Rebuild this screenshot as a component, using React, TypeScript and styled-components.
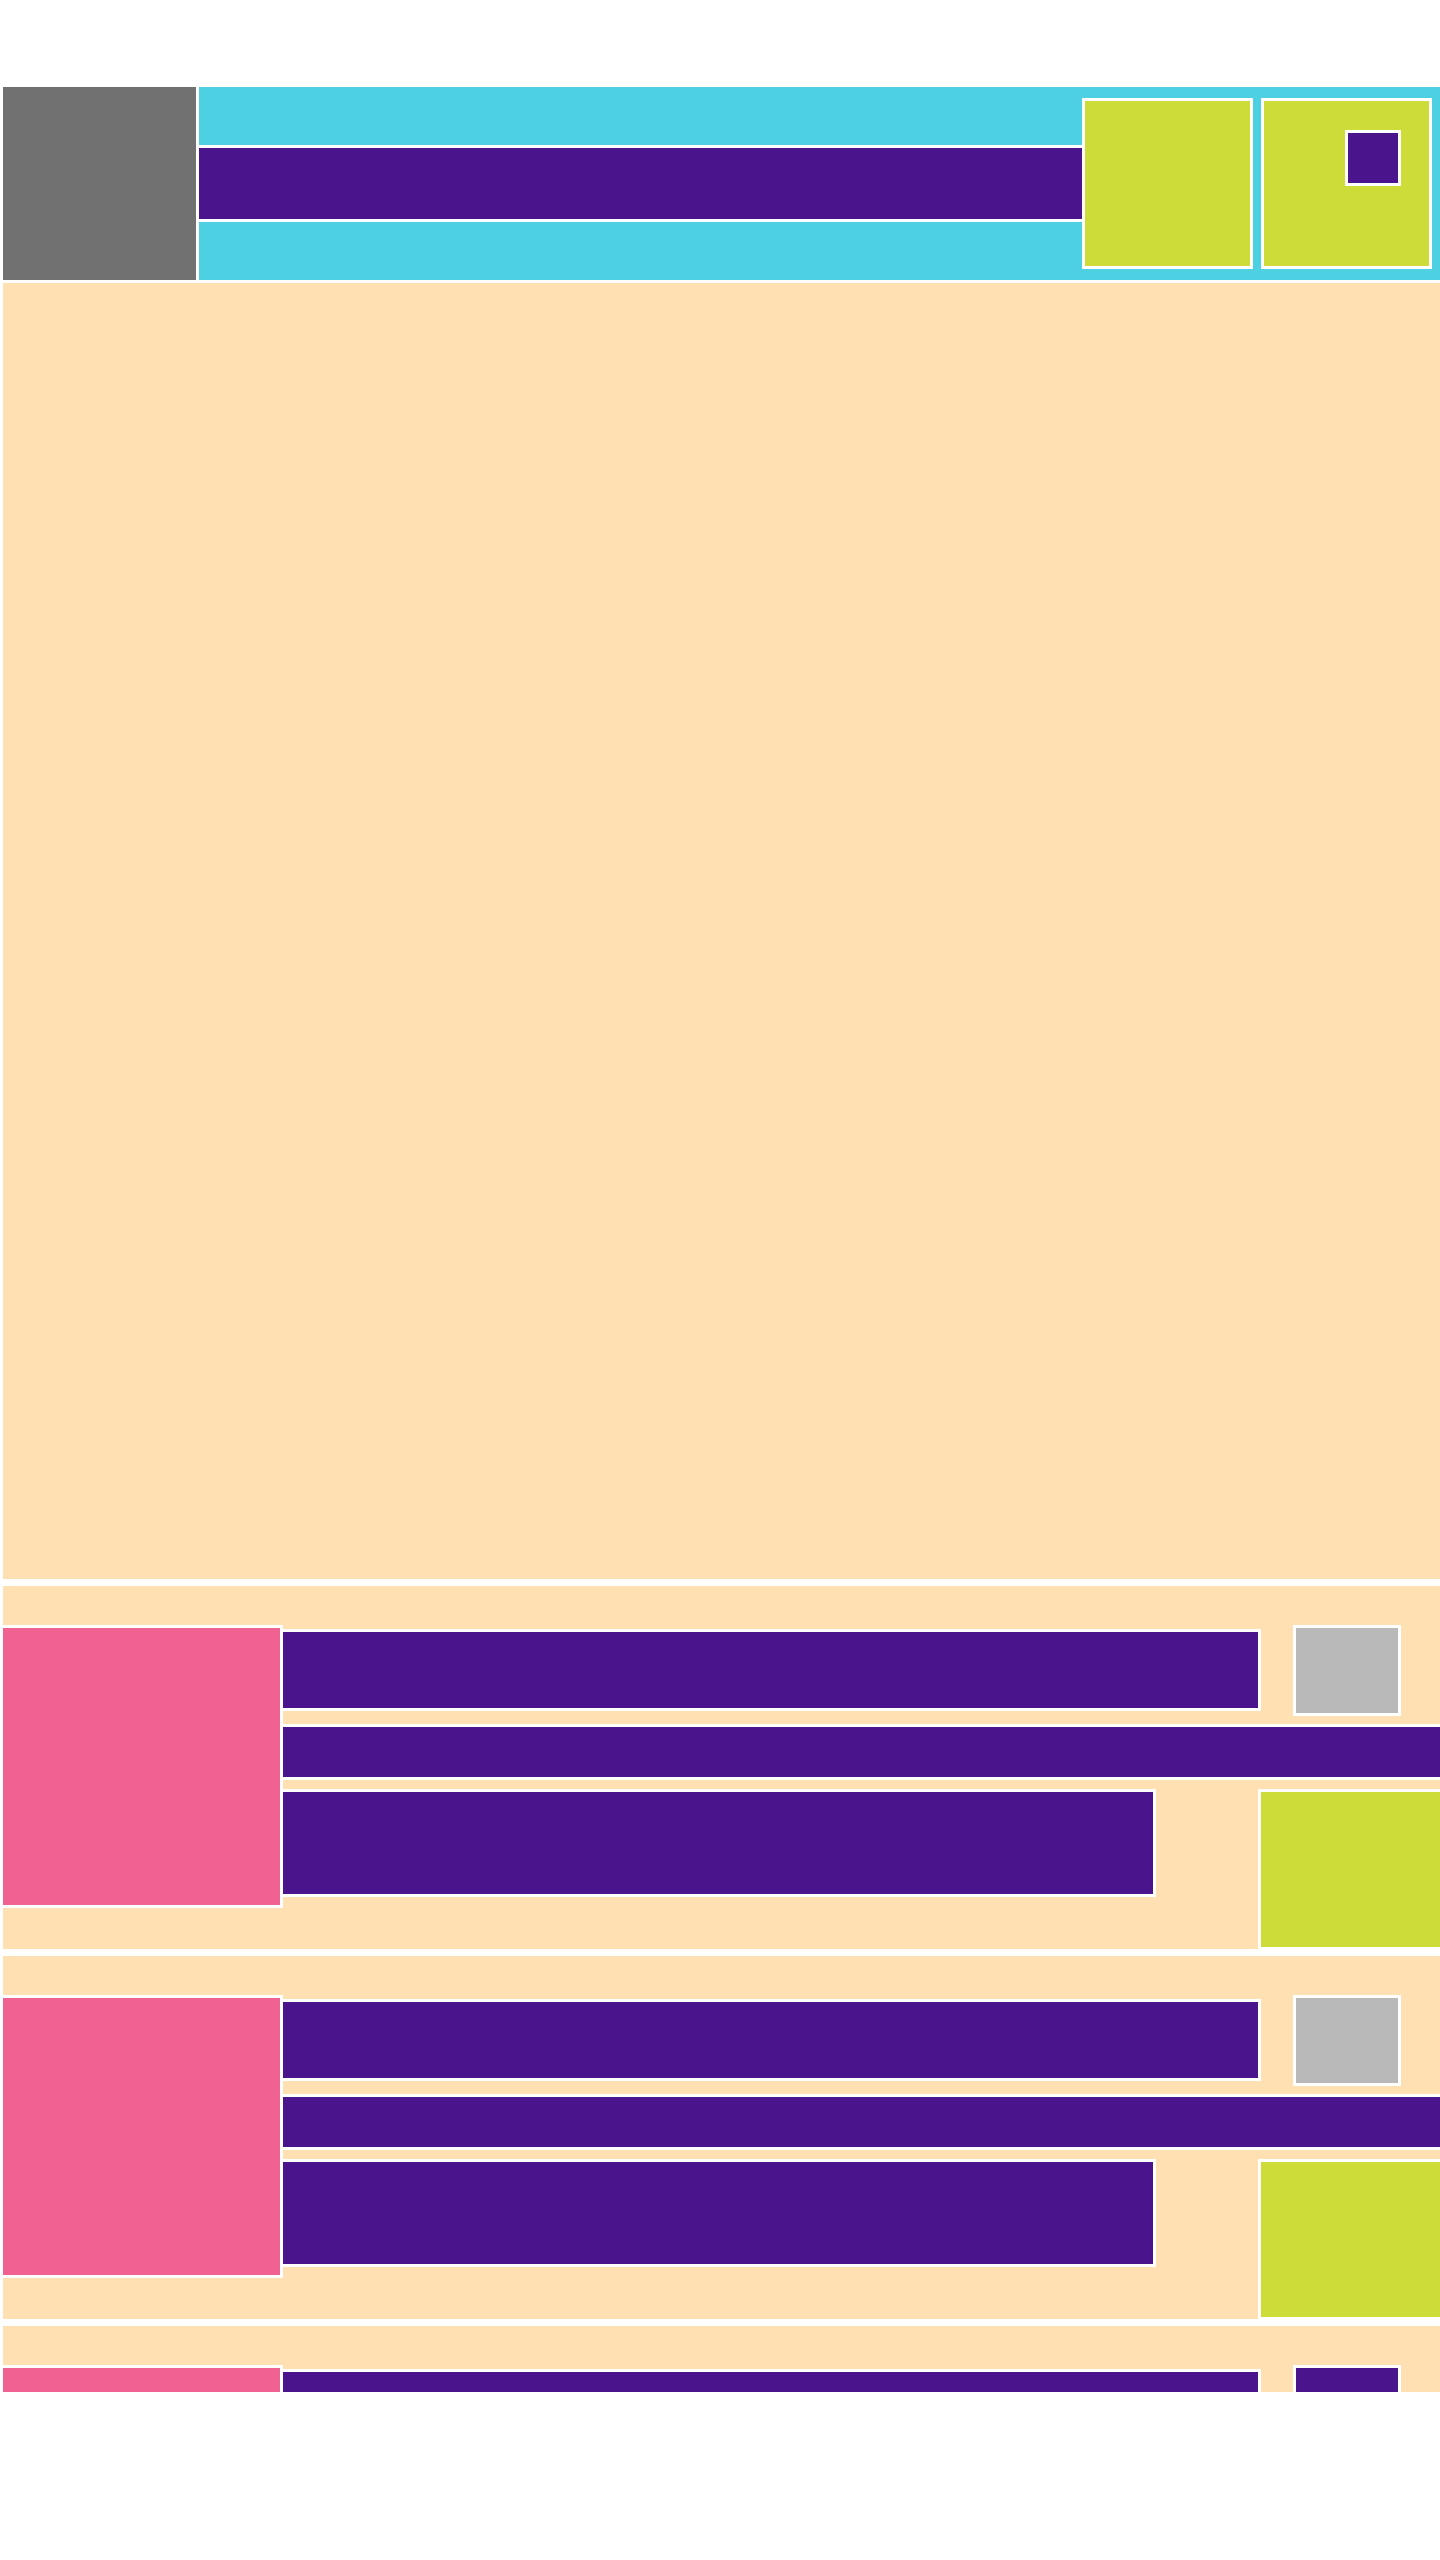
import React from 'react';
import styled, { createGlobalStyle } from 'styled-components';

const color = {
  white: '#ffffff',
  slate: '#717171',
  cyan: '#4dd0e1',
  purple: '#4a148c',
  lime: '#cddc39',
  sand: '#ffe0b2',
  pink: '#f06292',
  silver: '#b9b9b9',
};

const GlobalStyle = createGlobalStyle`
  html, body {
    margin: 0;
    padding: 0;
    background: ${color.white};
    font-family: 'Liberation Sans', Arial, sans-serif;
  }
`;

type CardItem = {
  id: number;
  badge: 'silver' | 'purple';
};

const cards: CardItem[] = [
  { id: 1, badge: 'silver' },
  { id: 2, badge: 'silver' },
  { id: 3, badge: 'purple' },
];

export default function App() {
  return (
    <>
      <GlobalStyle />
      <Page>
        <Header>
          <Logo />
          <TopBar>
            <SearchBar />
            <ActionTile />
            <ActionTile>
              <TileBadge />
            </ActionTile>
          </TopBar>
        </Header>
        <Hero />
        <CardList>
          {cards.map((card) => (
            <Card key={card.id}>
              <Thumb />
              <CardBody>
                <TitleRow>
                  <Title />
                  <Badge $tone={card.badge} />
                </TitleRow>
                <Subtitle />
                <FooterRow>
                  <Description />
                  <CardAction />
                </FooterRow>
              </CardBody>
            </Card>
          ))}
        </CardList>
      </Page>
    </>
  );
}

const Page = styled.div`
  box-sizing: border-box;
  width: 1440px;
  height: 2392px;
  padding: 87px 0 0 3px;
  overflow: hidden;
`;

const Block = styled.div`
  outline: 3px solid ${color.white};
  flex-shrink: 0;
`;

const Header = styled.header`
  display: flex;
  height: 193px;
  column-gap: 3px;
`;

const Logo = styled(Block)`
  width: 193px;
  background: ${color.slate};
`;

const TopBar = styled(Block)`
  flex: 1;
  display: flex;
  align-items: center;
  padding-right: 11px;
  background: ${color.cyan};
`;

const SearchBar = styled(Block)`
  flex: 1;
  height: 71px;
  margin-right: 3px;
  background: ${color.purple};
`;

const ActionTile = styled(Block)`
  box-sizing: border-box;
  width: 165px;
  height: 165px;
  padding: 32px 0 0 84px;
  background: ${color.lime};

  & + & {
    margin-left: 14px;
  }
`;

const TileBadge = styled(Block)`
  width: 50px;
  height: 50px;
  background: ${color.purple};
`;

const Hero = styled(Block)`
  height: 1296px;
  margin-top: 3px;
  background: ${color.sand};
`;

const CardList = styled.div`
  display: flex;
  flex-direction: column;
  row-gap: 7px;
  margin-top: 7px;
`;

const Card = styled(Block)`
  display: flex;
  height: 363px;
  background: ${color.sand};
`;

const Thumb = styled(Block)`
  width: 277px;
  height: 277px;
  margin-top: 42px;
  background: ${color.pink};
`;

const CardBody = styled.div`
  flex: 1;
  display: flex;
  flex-direction: column;
  padding-top: 42px;
  margin-left: 3px;
`;

const TitleRow = styled.div`
  display: flex;
  align-items: flex-start;
`;

const Title = styled(Block)`
  width: 975px;
  height: 76px;
  margin-top: 4px;
  background: ${color.purple};
`;

const Badge = styled(Block)<{ $tone: 'silver' | 'purple' }>`
  width: 102px;
  height: 85px;
  margin-left: 38px;
  background: ${(props) => (props.$tone === 'silver' ? color.silver : color.purple)};
`;

const Subtitle = styled(Block)`
  height: 50px;
  margin-top: 14px;
  background: ${color.purple};
`;

const FooterRow = styled.div`
  display: flex;
  align-items: flex-start;
  margin-top: 15px;
`;

const Description = styled(Block)`
  width: 870px;
  height: 102px;
  background: ${color.purple};
`;

const CardAction = styled(Block)`
  flex: 1;
  height: 155px;
  margin-left: 108px;
  background: ${color.lime};
`;
